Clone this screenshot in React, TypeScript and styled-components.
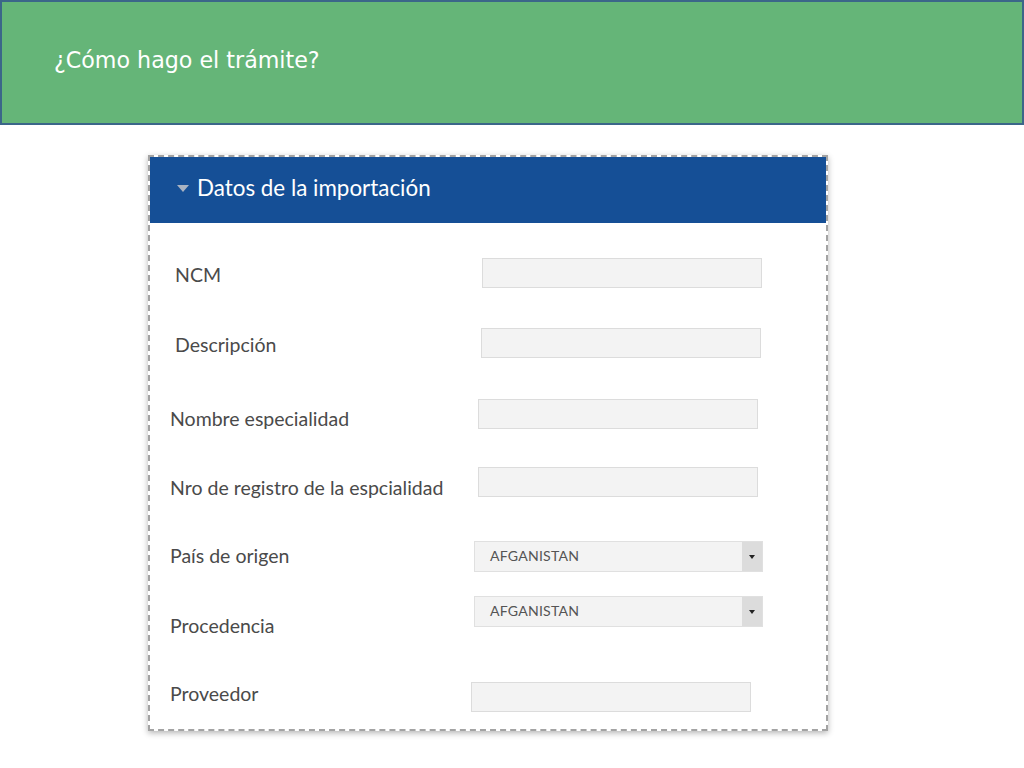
import React from "react";
import styled, { createGlobalStyle } from "styled-components";

const Global = createGlobalStyle`
  html, body { margin: 0; padding: 0; background: #ffffff; }
  #root { width: 1024px; height: 768px; overflow: hidden; }
`;

const Page = styled.div`
  width: 1024px;
  height: 768px;
  display: flex;
  flex-direction: column;
  background: #ffffff;
`;

const Banner = styled.header`
  box-sizing: border-box;
  height: 125px;
  background: #65b578;
  border: 2px solid #3b6689;
  padding: 42px 0 0 52px;
`;

const Title = styled.h1`
  margin: 0;
  font-family: "DejaVu Sans", sans-serif;
  font-weight: normal;
  font-size: 22.2px;
  line-height: 32px;
  color: #ffffff;
`;

const Stage = styled.main`
  padding: 30px 0 0 148px;
`;

const Panel = styled.section`
  box-sizing: border-box;
  width: 680px;
  height: 576px;
  border: 2px dashed #a3a3a3;
  box-shadow: 0 2px 6px rgba(0, 0, 0, 0.3);
  background: #ffffff;
  display: flex;
  flex-direction: column;
`;

const PanelHeader = styled.div`
  height: 66px;
  background: #154f96;
  display: flex;
  align-items: center;
  padding: 0 0 6px 27px;
  gap: 8px;
  box-sizing: border-box;
`;

const Caret = styled.span`
  width: 0;
  height: 0;
  border-left: 6px solid transparent;
  border-right: 6px solid transparent;
  border-top: 7px solid #a9b3c2;
  margin-top: 2px;
`;

const PanelTitle = styled.h2`
  margin: 0;
  font-family: Lato, "Noto Sans", sans-serif;
  font-weight: normal;
  font-size: 22.4px;
  color: #ffffff;
`;

const Body = styled.div`
  padding-top: 35px;
  display: flex;
  flex-direction: column;
`;

const Row = styled.div<{ $h: number; $lx: number; $fx: number }>`
  height: ${(p) => p.$h}px;
  display: grid;
  grid-template-columns: ${(p) => p.$lx}px ${(p) => p.$fx - p.$lx}px auto;
  align-items: start;
`;

const Label = styled.label<{ $dy: number }>`
  grid-column: 2;
  padding-top: ${(p) => p.$dy}px;
  font-family: Lato, "Noto Sans", sans-serif;
  font-size: 19.5px;
  line-height: 20px;
  color: #4a4a4a;
  white-space: nowrap;
`;

const Input = styled.div<{ $w: number }>`
  grid-column: 3;
  box-sizing: border-box;
  width: ${(p) => p.$w}px;
  height: 30px;
  background: #f3f3f3;
  border: 1px solid #dcdcdc;
`;

const Select = styled.div<{ $w: number }>`
  grid-column: 3;
  box-sizing: border-box;
  width: ${(p) => p.$w}px;
  height: 31px;
  background: #f3f3f3;
  border: 1px solid #e0e0e0;
  display: flex;
  align-items: center;
`;

const SelectText = styled.span`
  flex: 1;
  padding: 0 0 3px 15px;
  font-family: Lato, "Noto Sans", sans-serif;
  font-size: 14.1px;
  color: #555555;
  letter-spacing: 0.2px;
`;

const SelectArrow = styled.span`
  width: 20px;
  align-self: stretch;
  background: #dcdcdc;
  display: flex;
  align-items: center;
  justify-content: center;
  &::after {
    content: "";
    border-left: 3px solid transparent;
    border-right: 3px solid transparent;
    border-top: 4px solid #222;
  }
`;

type Field = {
  label: string;
  h: number;
  lx: number;
  fx: number;
  dy: number;
  w: number;
  select?: boolean;
};

const fields: Field[] = [
  { label: "NCM", h: 70, lx: 25, fx: 332, dy: 7, w: 280 },
  { label: "Descripción", h: 71, lx: 25, fx: 331, dy: 7, w: 280 },
  { label: "Nombre especialidad", h: 68, lx: 20, fx: 328, dy: 10, w: 280 },
  { label: "Nro de registro de la espcialidad", h: 74, lx: 20, fx: 328, dy: 11, w: 280 },
  { label: "País de origen", h: 55, lx: 20, fx: 324, dy: 5, w: 289, select: true },
  { label: "Procedencia", h: 86, lx: 20, fx: 324, dy: 20, w: 289, select: true },
  { label: "Proveedor", h: 40, lx: 20, fx: 321, dy: 2, w: 280 },
];

export default function App() {
  return (
    <Page>
      <Global />
      <Banner>
        <Title>¿Cómo hago el trámite?</Title>
      </Banner>
      <Stage>
        <Panel>
          <PanelHeader>
            <Caret />
            <PanelTitle>Datos de la importación</PanelTitle>
          </PanelHeader>
          <Body>
            {fields.map((f) => (
              <Row key={f.label} $h={f.h} $lx={f.lx} $fx={f.fx}>
                <Label $dy={f.dy}>{f.label}</Label>
                {f.select ? (
                  <Select $w={f.w}>
                    <SelectText>AFGANISTAN</SelectText>
                    <SelectArrow />
                  </Select>
                ) : (
                  <Input $w={f.w} />
                )}
              </Row>
            ))}
          </Body>
        </Panel>
      </Stage>
    </Page>
  );
}
